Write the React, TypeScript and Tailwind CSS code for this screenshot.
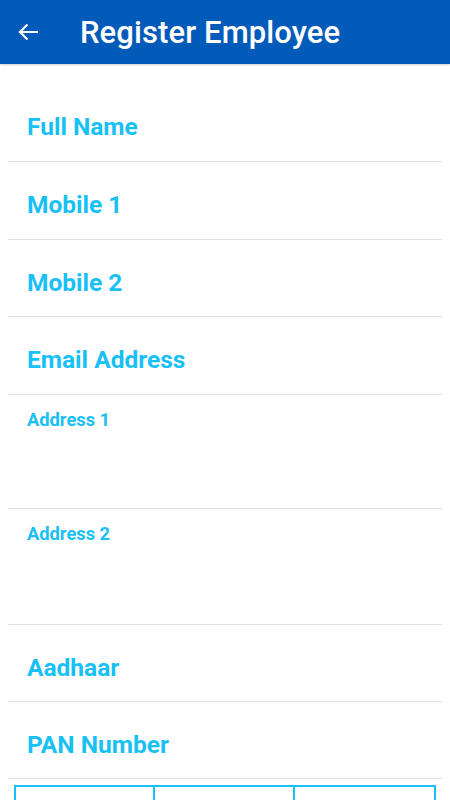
import React from "react";

function Row({ label, h = "h-[78px]", small = false }: { label: string; h?: string; small?: boolean }) {
  return (
    <div className={`mx-2 border-b border-[#e0e0e0] ${h}`}>
      {small ? (
        <div className="pl-[19px] pt-[14px] text-[18.3px] leading-[22px] font-bold text-[#17c0f5]">{label}</div>
      ) : (
        <div className="pl-[19px] pt-[28px] text-[24.5px] leading-[30px] font-bold text-[#17c0f5]">{label}</div>
      )}
    </div>
  );
}

export default function App() {
  return (
    <div className="w-[450px] h-[800px] overflow-hidden bg-white" style={{ fontFamily: "Roboto, 'Noto Sans', sans-serif" }}>
      <div className="h-[64px] bg-[#035bb9] flex items-center shadow-[0_1px_2px_rgba(0,0,0,0.2)] relative z-10">
        <div className="w-[57px] flex pl-[17px]">
          <svg width="23" height="20" viewBox="0 0 23 20">
            <path d="M21 10H3M10.5 2.5L3 10l7.5 7.5" stroke="#fff" strokeWidth="2.2" fill="none" strokeLinecap="butt" strokeLinejoin="miter" />
          </svg>
        </div>
        <div className="pl-[23px] text-white text-[31px] font-medium leading-none tracking-[0.1px]">Register Employee</div>
      </div>
      <div className="pt-[20px]">
        <Row label="Full Name" />
        <Row label="Mobile 1" h="h-[78px]" />
        <Row label="Mobile 2" h="h-[77px]" />
        <Row label="Email Address" h="h-[78px]" />
        <Row label="Address 1" h="h-[114px]" small />
        <Row label="Address 2" h="h-[116px]" small />
        <Row label="Aadhaar" h="h-[77px]" />
        <Row label="PAN Number" h="h-[77px]" />
        <div className="mx-[14px] mt-[6px] grid grid-cols-3 border-2 border-[#17c0f5] h-[40px]">
          <div className="border-r-2 border-[#17c0f5]" />
          <div className="border-r-2 border-[#17c0f5]" />
          <div />
        </div>
      </div>
    </div>
  );
}
